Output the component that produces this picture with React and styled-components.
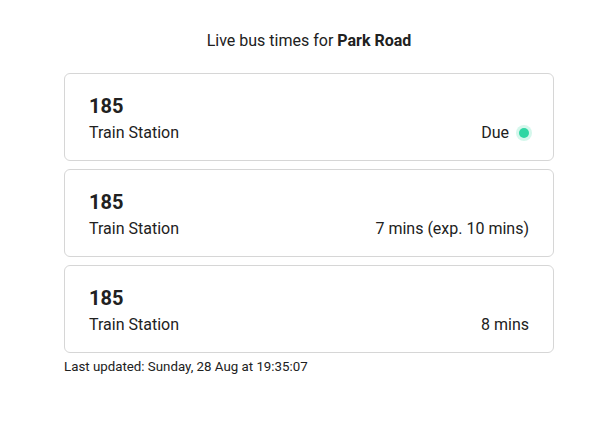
import React from 'react';
import styled, { createGlobalStyle } from 'styled-components';

const GlobalStyle = createGlobalStyle`
  body {
    margin: 0;
    background: #fff;
    font-family: Roboto, "Liberation Sans", sans-serif;
    color: #212121;
  }
`;

const Page = styled.main`
  width: 490px;
  margin-left: 64px;
  padding-top: 31px;
`;

const Title = styled.h1`
  margin: 0 0 22px;
  font-size: 16px;
  line-height: 20px;
  font-weight: 400;
  text-align: center;
  b { font-weight: 700; }
`;

const List = styled.ul`
  list-style: none;
  margin: 0;
  padding: 0;
  display: flex;
  flex-direction: column;
  gap: 8px;
`;

const Card = styled.li`
  border: 1px solid #d6d6d6;
  border-radius: 6px;
  padding: 20px 24px 17px 24px;
  display: flex;
  flex-direction: column;
  gap: 5px;
`;

const Route = styled.div`
  font-size: 20px;
  line-height: 24px;
  font-weight: 700;
`;

const Row = styled.div`
  display: flex;
  justify-content: space-between;
  align-items: center;
  font-size: 16px;
  line-height: 20px;
`;

const Time = styled.span`
  display: flex;
  align-items: center;
  gap: 10px;
`;

const Dot = styled.span`
  width: 10px;
  height: 10px;
  border-radius: 50%;
  background: #2fd6a3;
  box-shadow: 0 0 0 3px #d5f7ec;
`;

const Updated = styled.p`
  margin: 6px 0 0;
  font-size: 13.3px;
  line-height: 16px;
`;

const buses = [
  { route: '185', dest: 'Train Station', time: 'Due', live: true },
  { route: '185', dest: 'Train Station', time: '7 mins (exp. 10 mins)' },
  { route: '185', dest: 'Train Station', time: '8 mins' },
];

export default function App() {
  return (
    <>
      <GlobalStyle />
      <Page>
        <Title>Live bus times for <b>Park Road</b></Title>
        <List>
          {buses.map((b, i) => (
            <Card key={i}>
              <Route>{b.route}</Route>
              <Row>
                <span>{b.dest}</span>
                <Time>
                  {b.time}
                  {b.live && <Dot />}
                </Time>
              </Row>
            </Card>
          ))}
        </List>
        <Updated>Last updated: Sunday, 28 Aug at 19:35:07</Updated>
      </Page>
    </>
  );
}
